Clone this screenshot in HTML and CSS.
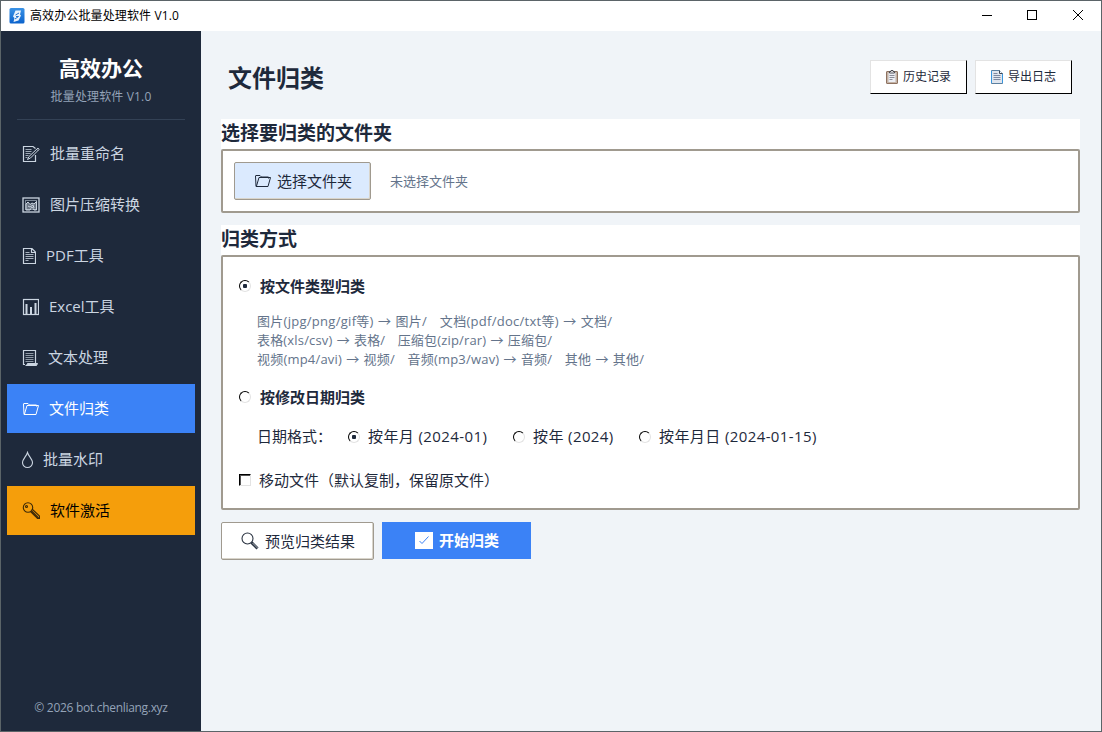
FILE: index.html
```html
<!doctype html>
<html lang="zh-CN">
<head>
    <meta charset="UTF-8">
    <meta name="viewport" content="width=device-width, initial-scale=1.0">
    <title>高效办公批量处理软件 V1.0</title>
    <link rel="stylesheet" href="styles.css">
</head>
<body>
<div class="window">
    <header class="titlebar">
        <svg class="logo" width="16" height="16" viewBox="0 0 16 16">
            <defs>
                <linearGradient id="logo-bg" x1="0" y1="0" x2="0" y2="1">
                    <stop offset="0" stop-color="#3b93e6"/>
                    <stop offset="1" stop-color="#0a62cc"/>
                </linearGradient>
            </defs>
            <rect x="0.5" y="0" width="15" height="15.5" rx="1.5" fill="url(#logo-bg)"/>
            <path d="M6.500 2.500h5.500l-1 4 1 1-2.500 5-5 1.500L5.500 10 4 8.500z" fill="#fff" fill-opacity=".9"/>
            <path d="M6.500 7l3.500-2M6 11l3.500-2.500M7 8.500h2.500" stroke="#2272d0" fill="none"/>
        </svg>
        <span class="titlebar-text">高效办公批量处理软件 V1.0</span>
        <svg class="controls" width="138" height="30" viewBox="0 0 138 30" fill="none" stroke="#000" shape-rendering="crispEdges">
            <path d="M19 14.500h10"/>
            <rect x="64.500" y="9.500" width="9" height="9"/>
            <path d="M110 9l10 10M120 9l-10 10" shape-rendering="auto"/>
        </svg>
    </header>
    <div class="body">
        <aside class="sidebar">
            <h1 class="brand">高效办公</h1>
            <p class="version">批量处理软件 V1.0</p>
            <div class="line"></div>
            <ul class="nav">
                <li class="nav-item">
                    <svg width="18" height="18" viewBox="0 0 18 18" fill="none" stroke="currentColor">
                        <path d="M13.500 10v6.500h-12v-15h9.500l2.500 2" stroke-width="1.200"/>
                        <path d="M3.500 4.500h6M3.500 6.500h6M3.500 8.500h5M3.500 10.500h3M3.500 12.500h2" stroke-opacity=".75"/>
                        <path d="M16 3L7 11.500 5.500 14.500 8.500 13 17 4.500zM15 4.500l1 1"/>
                    </svg>
                    <span>批量重命名</span>
                </li>
                <li class="nav-item">
                    <svg width="18" height="18" viewBox="0 0 18 18" fill="none" stroke="currentColor">
                        <rect x="1" y="2" width="16" height="14" stroke-width="1.300"/>
                        <rect x="3.500" y="4.500" width="11" height="9" stroke-opacity=".55"/>
                        <path d="M4 8l2-2 2 2.500 2-1.500 2 1 2.500-2.500V14H12l-2-3-2 3H4zM6 10l2 1 3-2 1 3" fill="currentColor" fill-opacity=".45"/>
                    </svg>
                    <span>图片压缩转换</span>
                </li>
                <li class="nav-item">
                    <svg width="14" height="18" viewBox="0 0 14 18" fill="none" stroke="currentColor">
                        <path d="M1.500 1.500h8.500l3.500 3.500v11.500h-12zM9.500 1.500v4h4" stroke-width="1.200"/>
                        <path d="M3.500 5.500h4M3.500 7.500h8M3.500 9.500h8M3.500 11.500h8M3.500 13.500h3" stroke-opacity=".8"/>
                    </svg>
                    <span>PDF工具</span>
                </li>
                <li class="nav-item">
                    <svg width="17" height="18" viewBox="0 0 17 18" fill="none" stroke="currentColor">
                        <rect x="1.500" y="1.500" width="15" height="15" stroke-width="1.200"/>
                        <path d="M4.500 6v10M9 9v7M13.500 5v11" stroke-width="2"/>
                    </svg>
                    <span>Excel工具</span>
                </li>
                <li class="nav-item">
                    <svg width="16" height="18" viewBox="0 0 16 18" fill="none" stroke="currentColor">
                        <path d="M3 15.500H1.500v-14h12V14" stroke-width="1.200"/>
                        <path d="M3.500 16.500h11l1-2H5.500l-1 2" fill="currentColor"/>
                        <path d="M3.500 4.500h8M3.500 6.500h8M3.500 8.500h8M3.500 10.500h8M3.500 12.500h8" stroke-opacity=".65"/>
                    </svg>
                    <span>文本处理</span>
                </li>
                <li class="nav-item active">
                    <svg width="17" height="18" viewBox="0 0 17 18" fill="none" stroke="currentColor">
                        <path d="M2 14.500L1.500 4q0-.5.500-.5h4l1.500 1.500h7v1.500"/>
                        <path d="M2 14.500h12l2.500-9H5L2.500 14"/>
                    </svg>
                    <span>文件归类</span>
                </li>
                <li class="nav-item">
                    <svg width="11" height="18" viewBox="0.500 0 11 18" fill="none" stroke="currentColor">
                        <path d="M6 1.500C5 5 1 8.500 1 11.500a5 5 0 0 0 10 0C11 8.500 7 5 6 1.500z" stroke-width="1.100"/>
                    </svg>
                    <span>批量水印</span>
                </li>
                <li class="nav-item vip">
                    <svg width="18" height="18" viewBox="0 0 18 18" fill="none" stroke="#3d2a08" stroke-width="1.100">
                        <circle cx="6" cy="5.500" r="4.700"/>
                        <circle cx="4.500" cy="4.500" r="1"/>
                        <path d="M8.500 9.500l7 7h2v-2.500l-7.500-7"/>
                        <path d="M9.500 9l7 7" stroke-width="1.600"/>
                    </svg>
                    <span>软件激活</span>
                </li>
            </ul>
            <p class="copyright">© 2026 bot.chenliang.xyz</p>
        </aside>
        <main class="main">
            <div class="main-head">
                <h2 class="page-title">文件归类</h2>
                <div class="tools">
                    <button class="tool">
                        <svg width="12" height="14" viewBox="0 0 12 14" fill="none">
                            <rect x=".5" y="1.500" width="11" height="12" rx=".5" fill="#c3b3a6" stroke="#8f7260"/>
                            <rect x="2.500" y="3" width="7" height="9" fill="#eceef4"/>
                            <path d="M3.500 3V1.500h1.500V.5h2v1H8.500V3z" fill="#fff" stroke="#4a4a52"/>
                            <path d="M3.500 5.500h5M3.500 7.500h5M3.500 9.500h3" stroke="#8b8d99"/>
                        </svg>
                        <span>历史记录</span>
                    </button>
                    <button class="tool">
                        <svg width="12" height="14" viewBox="0 0 12 14" fill="none">
                            <path d="M.5.5h8l3 3v10H.5z" fill="#dfe5ee" stroke="#5b7f9f"/>
                            <path d="M8.500.5v3h3" fill="#fff" stroke="#3b4454"/>
                            <path d="M.5 1v12M11.500 4v9" stroke="#3795dd"/>
                            <path d="M2.500 3.500h4M2.500 5.500h7M2.500 7.500h7M2.500 9.500h7" stroke="#7c88a0"/>
                        </svg>
                        <span>导出日志</span>
                    </button>
                </div>
            </div>

            <section class="group">
                <h3 class="group-title">选择要归类的文件夹</h3>
                <div class="group-box pick">
                    <button class="btn btn-pick">
                        <svg width="17" height="18" viewBox="0 0 17 18" fill="none" stroke="#1e293b">
                            <path d="M2 14.500L1.500 4q0-.5.500-.5h4l1.500 1.500h7v1.500"/>
                            <path d="M2 14.500h12l2.500-9H5L2.500 14"/>
                        </svg>
                        <span>选择文件夹</span>
                    </button>
                    <span class="hint">未选择文件夹</span>
                </div>
            </section>

            <section class="group">
                <h3 class="group-title">归类方式</h3>
                <div class="group-box mode">
                    <label class="option bold"><input class="radio" type="radio" name="mode" checked><span>按文件类型归类</span></label>
                    <div class="desc">
                        <p class="desc-a">图片(jpg/png/gif等) → 图片/ &nbsp; 文档(pdf/doc/txt等) → 文档/</p>
                        <p class="desc-b">表格(xls/csv) → 表格/ &nbsp; 压缩包(zip/rar) → 压缩包/</p>
                        <p class="desc-c">视频(mp4/avi) → 视频/ &nbsp; 音频(mp3/wav) → 音频/ &nbsp; 其他 → 其他/</p>
                    </div>
                    <label class="option bold"><input class="radio" type="radio" name="mode"><span>按修改日期归类</span></label>
                    <div class="dates">
                        <span class="dates-label">日期格式：</span>
                        <label class="option month"><input class="radio" type="radio" name="date" checked><span>按年月 (2024-01)</span></label>
                        <label class="option year"><input class="radio" type="radio" name="date"><span>按年 (2024)</span></label>
                        <label class="option day"><input class="radio" type="radio" name="date"><span>按年月日 (2024-01-15)</span></label>
                    </div>
                    <label class="option move"><input class="check" type="checkbox"><span>移动文件（默认复制，保留原文件）</span></label>
                </div>
            </section>

            <div class="actions">
                <button class="btn btn-preview">
                    <svg width="18" height="18" viewBox="0 0 18 18" fill="none" stroke="#2b3442">
                        <circle cx="6.500" cy="6.500" r="5.500" stroke-width="1.100"/>
                        <path d="M10.500 10.500l6 6" stroke-width="3"/>
                        <path d="M11.500 11l5 5" stroke="#a8adb5"/>
                    </svg>
                    <span>预览归类结果</span>
                </button>
                <button class="btn-start">
                    <svg width="18" height="17" viewBox="0 0 18 17" fill="none">
                        <rect width="18" height="17" fill="#fff"/>
                        <path d="M4.500 9l2.500 2.500 6.500-7" stroke="#3b82f6"/>
                    </svg>
                    <span>开始归类</span>
                </button>
            </div>
        </main>
    </div>
</div>
</body>
</html>
```
FILE: styles.css
```css
* {
    margin: 0;
    padding: 0;
    box-sizing: border-box;
}

body {
    font-family: "Open Sans", "Noto Sans CJK SC", sans-serif;
    font-size: 15px;
    color: #1e293b;
}

ul, li {
    list-style: none;
}

svg {
    display: block;
    flex: none;
}

button {
    font-family: inherit;
    color: inherit;
}

.window {
    display: flex;
    flex-direction: column;
    width: 1102px;
    height: 732px;
    border: 1px solid #5b6468;
    background-color: #f0f4f8;
}

.titlebar {
    display: flex;
    align-items: center;
    height: 30px;
    padding-left: 8px;
    background-color: #fff;
    color: #000;
    font-size: 12px;
}

.titlebar-text {
    flex: 1;
    margin-left: 5px;
    padding-bottom: 2px;
    letter-spacing: .12px;
}

.body {
    display: flex;
    flex: 1;
}

.sidebar {
    display: flex;
    flex-direction: column;
    width: 200px;
    padding: 21px 6px 13px;
    background-color: #1e293b;
    color: #cbd5e1;
}

.brand {
    line-height: 32px;
    text-align: center;
    color: #fff;
    font-size: 21px;
}

.version {
    margin-top: 2px;
    line-height: 22px;
    text-align: center;
    color: #94a3b8;
    font-size: 12px;
    letter-spacing: .15px;
}

.line {
    height: 1px;
    margin: 11px 10px 9px;
    background-color: #334155;
}

.nav-item {
    display: flex;
    align-items: center;
    gap: 10px;
    height: 49px;
    margin-bottom: 2px;
    padding-left: 15px;
}

.nav-item span, .tool span, .btn span, .btn-start span, .option span {
    padding-bottom: 2px;
}

.nav-item.active {
    background-color: #3b82f6;
    color: #fff;
}

.nav-item.vip {
    background-color: #f59e0b;
    color: #000;
}

.copyright {
    margin-top: auto;
    line-height: 20px;
    text-align: center;
    color: #94a3b8;
    font-size: 12px;
    letter-spacing: -.3px;
}

.main {
    flex: 1;
    padding: 28px 21px 0 20px;
}

.main-head {
    display: flex;
    justify-content: space-between;
    height: 60px;
    padding: 0 8px 0 7px;
}

.page-title {
    line-height: 37px;
    font-size: 24px;
}

.tools {
    display: flex;
    gap: 8px;
    padding-top: 1px;
}

.tool {
    display: flex;
    align-items: center;
    justify-content: center;
    gap: 5px;
    width: 97px;
    height: 34px;
    border: 1px solid;
    border-color: #e3e3e3 #000 #000 #e3e3e3;
    background-color: #fff;
    font-size: 12px;
}

.group {
    margin-bottom: 12px;
}

.group-title {
    height: 30px;
    line-height: 29px;
    background-color: #fff;
    font-size: 19px;
}

.group-box {
    border: 2px solid #a09a8f;
    border-radius: 2px;
    background-color: #fff;
}

.pick {
    display: flex;
    align-items: center;
    height: 64px;
    padding-left: 11px;
}

.btn {
    display: flex;
    align-items: center;
    justify-content: center;
    height: 38px;
    border: 1px solid #a09a8f;
    border-radius: 2px;
    box-shadow: inset -1px -1px 0 #d9d5cb;
    background-color: #fff;
    font-size: 15px;
}

.btn-pick {
    gap: 6px;
    width: 137px;
    padding-left: 1px;
    background-color: #dbeafe;
}

.hint {
    margin-left: 19px;
    padding-bottom: 2px;
    color: #64748b;
    font-size: 13px;
}

.mode {
    height: 255px;
    padding: 18px 16px 0;
}

.option {
    display: flex;
    align-items: center;
    height: 22px;
    white-space: nowrap;
}

.bold {
    font-weight: bold;
}

.radio, .check {
    appearance: none;
    flex: none;
    width: 12px;
    height: 12px;
    margin-right: 9px;
    border: 1px solid;
    border-color: #000 #e3e3e3 #e3e3e3 #000;
    background-color: #fff;
}

.radio {
    border-radius: 50%;
}

.radio:checked {
    background-image: radial-gradient(circle, #1e293b 2px, transparent 2.5px);
}

.check {
    margin-right: 8px;
    box-shadow: inset 1px 1px 0 #555;
}

.desc {
    margin: 15px 0 17px 18px;
    line-height: 19px;
    color: #64748b;
    font-size: 13px;
    white-space: nowrap;
    word-spacing: .6px;
}

.desc-a {
    letter-spacing: .28px;
}

.desc-b {
    letter-spacing: .17px;
}

.desc-c {
    letter-spacing: .2px;
}

.dates {
    display: flex;
    align-items: center;
    margin: 17px 0 21px 18px;
}

.dates-label {
    width: 91px;
    padding-bottom: 2px;
}

.dates .option {
    letter-spacing: .4px;
}

.dates .radio {
    margin-right: 8px;
}

.month {
    width: 165px;
}

.year {
    width: 126px;
}

.actions {
    display: flex;
    gap: 8px;
}

.btn-preview {
    gap: 6px;
    width: 153px;
    padding-left: 1px;
}

.btn-start {
    display: flex;
    align-items: center;
    justify-content: center;
    gap: 6px;
    width: 149px;
    height: 37px;
    padding-left: 1px;
    border: none;
    background-color: #3b82f6;
    color: #fff;
    font-size: 15px;
    font-weight: bold;
}
```
